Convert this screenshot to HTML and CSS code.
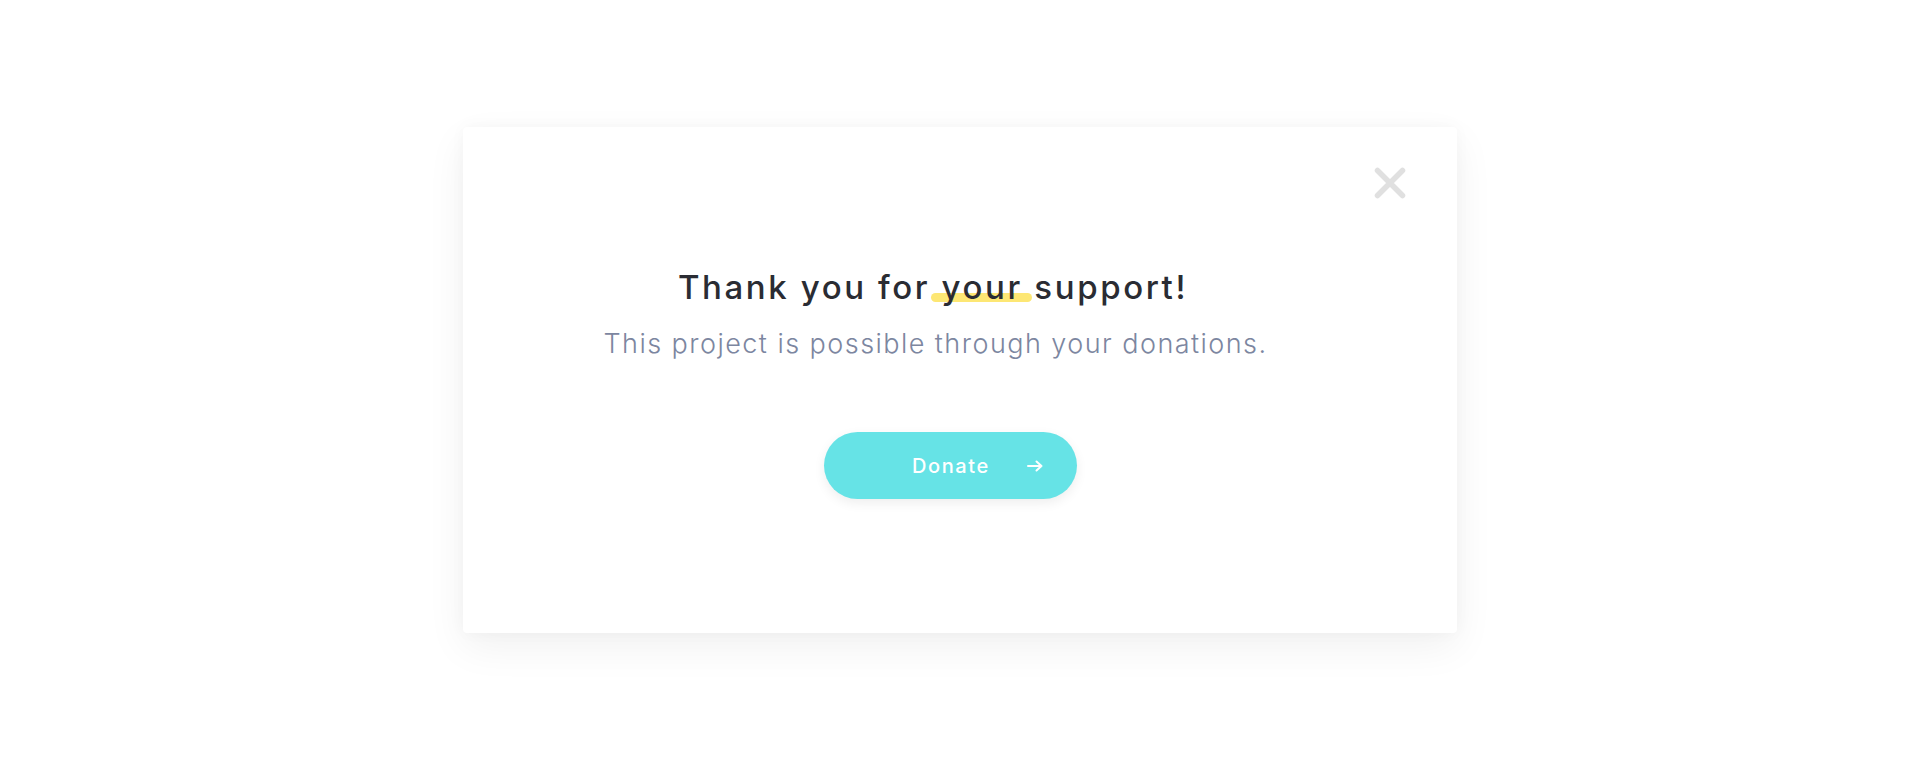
FILE: index.html
```html
<!DOCTYPE html>
<html lang="en">
<head>
<meta charset="utf-8">
<title>Thank you</title>
<link rel="stylesheet" href="styles.css">
</head>
<body>
<main class="page">
  <section class="card">
    <button class="close" aria-label="Close">
      <svg viewBox="0 0 34 34" width="34" height="34"><path d="M4.5 4.5 L29.5 29.5 M29.5 4.5 L4.5 29.5" stroke="#e0e0e0" stroke-width="5.5" stroke-linecap="round" fill="none"/></svg>
    </button>
    <div class="content">
      <h1 class="title">Thank you for <span class="mark">your</span> support!</h1>
      <p class="subtitle">This project is possible through your donations.</p>
      <button class="donate"><span class="donate-label">Donate</span><svg class="arrow" viewBox="0 0 16 12" width="16" height="12"><path d="M1 6 H14.5 M9.5 1.5 L14.5 6 L9.5 10.5" stroke="#ffffff" stroke-width="2" stroke-linecap="round" stroke-linejoin="round" fill="none"/></svg></button>
    </div>
  </section>
</main>
</body>
</html>
```

FILE: styles.css
```css
html, body {
  margin: 0;
  padding: 0;
  background: #ffffff;
}
.page {
  display: flex;
  justify-content: center;
  padding: 127px 0 137px 0;
}
.card {
  position: relative;
  box-sizing: border-box;
  width: 994px;
  height: 506px;
  background: #ffffff;
  border-radius: 4px;
  box-shadow: 0 14px 40px rgba(0, 0, 0, 0.06), 0 0 16px rgba(0, 0, 0, 0.03);
}
.close {
  position: absolute;
  top: 39px;
  right: 50px;
  padding: 0;
  border: 0;
  background: none;
  width: 34px;
  height: 34px;
  cursor: pointer;
}
.close svg { display: block; }
.content {
  display: flex;
  flex-direction: column;
  align-items: center;
  padding: 140px 54px 0 0;
  font-family: Inter, "Noto Sans", sans-serif;
}
.title {
  margin: 0;
  font-size: 33px;
  line-height: 40px;
  font-weight: 500;
  letter-spacing: 2.6px;
  color: #2a2c33;
}
.mark {
  position: relative;
  display: inline-block;
  z-index: 0;
}
.mark::before {
  content: "";
  position: absolute;
  left: -11px;
  right: -9px;
  bottom: 5px;
  height: 9px;
  border-radius: 5px;
  background: #fde774;
  z-index: -1;
}
.subtitle {
  margin: 21px 0 0 5px;
  font-size: 27px;
  line-height: 32px;
  font-weight: 300;
  letter-spacing: 1.45px;
  color: #7c86a0;
}
.donate {
  margin: 72px 0 0 35px;
  width: 253px;
  height: 67px;
  border: 0;
  border-radius: 34px;
  background: #66e3e6;
  color: #ffffff;
  font-family: Inter, "Noto Sans", sans-serif;
  font-size: 20px;
  font-weight: 500;
  letter-spacing: 1.6px;
  display: flex;
  align-items: center;
  padding: 0 34px 0 88px;
  box-sizing: border-box;
  box-shadow: 0 4px 12px rgba(0, 0, 0, 0.07);
  cursor: pointer;
}
.donate-label { flex: 1; text-align: left; }
.arrow { display: block; }
```
